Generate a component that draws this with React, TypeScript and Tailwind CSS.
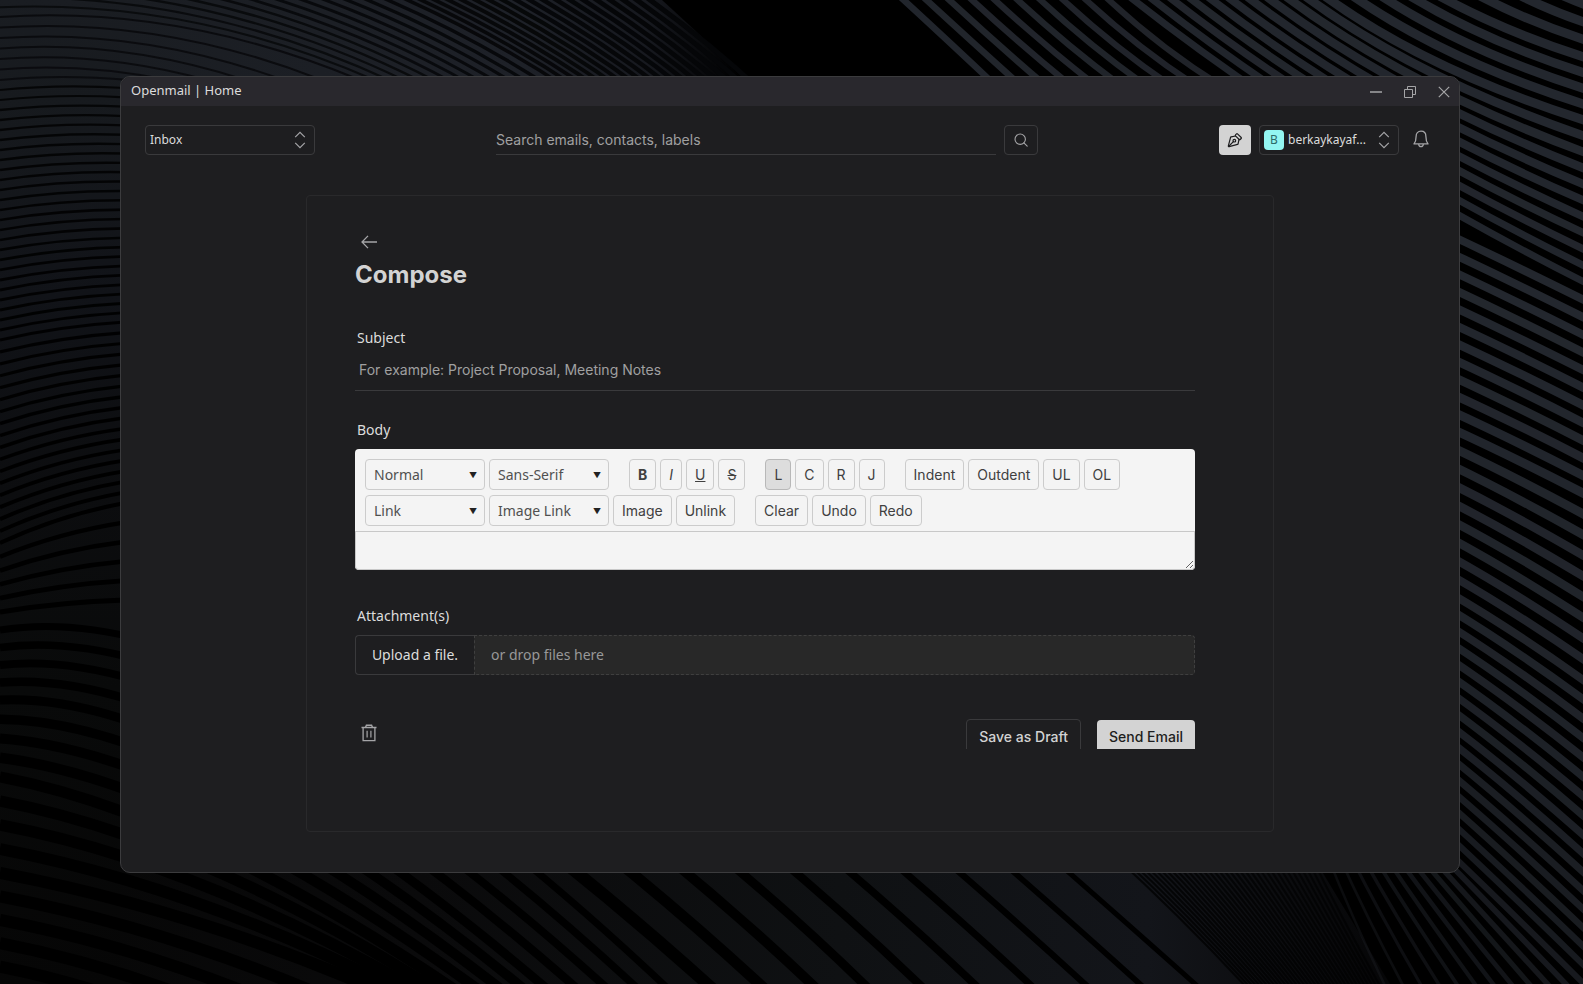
import { useState } from "react";
import type { ReactNode } from "react";
import { PenTool } from "lucide-react";

/* ---------- Wallpaper ---------- */

// start x/y, control x/y, end x/y, stroke width, opacity, lines up to the next key
type Key = [number, number, number, number, number, number, number, number, number];

const arcs: Key[] = [
  [0, 80, 60, 74, 130, 80, 2, 0.7, 6],
  [0, 17, 180, 5, 360, 80, 2, 0.75, 13],
  [0, -110, 330, -70, 570, 90, 3.5, 0.9, 18],
  [300, -200, 600, -60, 760, 90, 5, 1, 1],
];

const leftBands: Key[] = [
  [0, 90, 60, 84, 125, 88, 2.2, 0.75, 25],
  [0, 340, 60, 326, 125, 322, 3, 0.9, 17],
  [0, 543, 60, 515, 125, 503, 4, 1, 5],
  [0, 612, 60, 602, 125, 600, 5, 1, 1],
  [0, 630, 250, 590, 680, 1000, 7, 1, 4],
  [0, 700, 200, 690, 560, 1000, 9, 1, 4],
  [0, 777, 200, 815, 470, 1000, 11, 1, 4],
  [0, 873, 204, 912, 400, 1000, 12, 1, 5],
  [0, 990, 100, 1010, 200, 1060, 12, 1, 1],
];

const lowerBands: Key[] = [
  [400, 740, 560, 850, 725, 1000, 12, 1, 3],
  [600, 760, 760, 880, 880, 1000, 9, 1, 6],
  [940, 760, 1090, 890, 1213, 1000, 5, 1, 1],
];

const fineLines: Key[] = [
  [1108, 850, 1190, 925, 1258, 1000, 2.2, 0.75, 36],
  [1308, 850, 1345, 925, 1388, 1000, 2.2, 0.6, 1],
];

const topBands: Key[] = [
  [895, -8, 943, 36, 995, 85, 6.5, 0.95, 9],
  [1093, -15, 1155, 45, 1220, 85, 6, 0.9, 1],
];

const cornerBands: Key[] = [
  [1115, -15, 1320, 150, 1600, 290, 7, 0.95, 10],
  [1310, -15, 1420, 70, 1600, 125, 9, 1, 4],
  [1420, -15, 1500, 32, 1600, 62, 9, 1, 3],
  [1540, -15, 1570, 0, 1600, 10, 9, 1, 1],
];

const rightBands: Key[] = [
  [1450, 235, 1520, 268, 1600, 308, 8, 1, 11],
  [1450, 428, 1520, 460, 1600, 502, 9, 0.95, 9],
  [1450, 593, 1520, 634, 1600, 692, 8, 0.9, 8],
  [1450, 725, 1520, 778, 1600, 850, 7.5, 0.8, 8],
  [1450, 853, 1520, 920, 1600, 1000, 6, 0.65, 11],
  [1325, 850, 1355, 925, 1392, 1000, 2.5, 0.3, 1],
];

function weave(keys: Key[]): number[][] {
  const lines: number[][] = [];
  for (let i = 0; i < keys.length - 1; i++) {
    const count = keys[i][8];
    for (let n = 0; n < count; n++) {
      lines.push(keys[i].slice(0, 8).map((v, j) => v + ((keys[i + 1][j] - v) * n) / count));
    }
  }
  lines.push(keys[keys.length - 1].slice(0, 8));
  return lines;
}

function Strands({ keys, color }: { keys: Key[]; color: string }) {
  return (
    <g fill="none" stroke={color}>
      {weave(keys).map(([a, b, c, d, e, f, w, o], i) => (
        <path key={i} d={`M${a} ${b}Q${c} ${d} ${e} ${f}`} strokeWidth={w} strokeOpacity={o} />
      ))}
    </g>
  );
}

function Wallpaper() {
  return (
    <svg
      aria-hidden="true"
      className="absolute inset-0 h-full w-full"
      viewBox="0 0 1583 984"
      preserveAspectRatio="xMidYMid slice"
    >
      <defs>
        <linearGradient id="left-fill" x1="0" y1="0" x2="0" y2="1">
          <stop offset="0" stopColor="#1a1d22" />
          <stop offset="0.1" stopColor="#171a1e" />
          <stop offset="0.3" stopColor="#111318" />
          <stop offset="0.5" stopColor="#0c0d0f" />
          <stop offset="0.7" stopColor="#090a0a" />
          <stop offset="1" stopColor="#060606" />
        </linearGradient>
        <linearGradient id="top-fill" gradientUnits="userSpaceOnUse" x1="120" y1="0" x2="740" y2="0">
          <stop offset="0" stopColor="#1a1d22" />
          <stop offset="0.65" stopColor="#1e2128" />
          <stop offset="0.85" stopColor="#17191f" />
          <stop offset="1" stopColor="#000000" />
        </linearGradient>
        <linearGradient id="bottom-fill" gradientUnits="userSpaceOnUse" x1="0" y1="0" x2="1400" y2="0">
          <stop offset="0" stopColor="#060606" />
          <stop offset="0.3" stopColor="#0a0a0b" />
          <stop offset="0.6" stopColor="#0f1113" />
          <stop offset="0.82" stopColor="#13151a" />
          <stop offset="0.9" stopColor="#0d0e11" />
          <stop offset="1" stopColor="#050506" />
        </linearGradient>
      </defs>
      <rect width="1583" height="984" fill="#000" />
      <rect width="125" height="984" fill="url(#left-fill)" />
      <path d="M120 0H662L760 90H120Z" fill="url(#top-fill)" />
      <path d="M120 860H1315L1390 984H120Z" fill="url(#bottom-fill)" />
      <Strands keys={arcs} color="#050608" />
      <Strands keys={leftBands} color="#000000" />
      <Strands keys={lowerBands} color="#000000" />
      <Strands keys={fineLines} color="#000000" />
      <Strands keys={topBands} color="#23272e" />
      <Strands keys={cornerBands} color="#23272e" />
      <Strands keys={rightBands} color="#23272e" />
    </svg>
  );
}

/* ---------- Icons ---------- */

function SearchIcon() {
  return (
    <svg width="14" height="14" viewBox="0 0 14 14" fill="none" stroke="currentColor" aria-hidden="true">
      <circle cx="6.2" cy="6.2" r="5.2" strokeWidth="1.1" />
      <path d="M9.9 9.9l3.3 3.3" strokeWidth="1.1" strokeLinecap="round" />
    </svg>
  );
}

function ExpandIcon() {
  return (
    <svg width="12" height="18" viewBox="0 0 12 18" fill="none" stroke="#a5a5a7" strokeWidth="1.2" aria-hidden="true">
      <path d="M1.2 6.2L6 1.4l4.8 4.8M1.2 11.8L6 16.6l4.8-4.8" />
    </svg>
  );
}

function BellIcon() {
  return (
    <svg width="16" height="18" viewBox="0 0 16 18" fill="none" stroke="currentColor" strokeWidth="1.3" aria-hidden="true">
      <path d="M8 1.2C5 1.2 3.1 3.4 3.1 6.4c0 3.2-.4 5.3-2.1 7.5h14c-1.7-2.2-2.1-4.3-2.1-7.5C12.9 3.4 11 1.2 8 1.2z" strokeLinejoin="round" />
      <path d="M5.6 14.2c.2 1.6 1.2 2.5 2.4 2.5s2.2-.9 2.4-2.5" />
    </svg>
  );
}

function BackIcon() {
  return (
    <svg width="16" height="14" viewBox="0 0 16 14" fill="none" stroke="currentColor" strokeWidth="1.3" aria-hidden="true">
      <path d="M7 0.9L1 7l6 6.1M1 7h15" />
    </svg>
  );
}

function TrashIcon() {
  return (
    <svg width="16" height="18" viewBox="0 0 16 18" fill="none" stroke="currentColor" aria-hidden="true">
      <path d="M0.5 3.5h15M2.1 4v12.6h11.8V4" strokeWidth="1.3" />
      <path d="M4.6 3.3l.8-2h5.2l.8 2" strokeWidth="1.4" />
      <path d="M6.1 6.8v6.8M9.9 6.8v6.8" strokeWidth="1.2" />
    </svg>
  );
}

/* ---------- Title bar ---------- */

function TitleBar() {
  return (
    <div className="flex h-[29px] items-center justify-between bg-[#29282d] pr-2 pl-2.5">
      <h1 className="pb-[3px] font-['Noto_Sans',sans-serif] text-[13px] leading-5 text-[#dcdcdc]">Openmail | Home</h1>
      <div className="flex items-center gap-5 text-[#a5a5a7]">
        <button type="button" aria-label="Minimize" className="flex h-4 w-3.5 items-center justify-center">
          <svg width="12" height="12" viewBox="0 0 12 12" stroke="currentColor" aria-hidden="true">
            <path d="M0 6h12" strokeWidth="1.5" />
          </svg>
        </button>
        <button type="button" aria-label="Restore" className="flex h-4 w-3.5 items-center justify-center">
          <svg width="12" height="12" viewBox="0 0 12 12" fill="none" stroke="currentColor" aria-hidden="true">
            <path d="M0.5 3.5h8v8h-8zM3.5 3.5v-3h8v8h-3" />
          </svg>
        </button>
        <button type="button" aria-label="Close" className="flex h-4 w-3.5 items-center justify-center">
          <svg width="12" height="12" viewBox="0 0 12 12" stroke="currentColor" aria-hidden="true">
            <path d="M0.8 0.8l10.4 10.4M11.2 0.8L0.8 11.2" strokeWidth="1.2" />
          </svg>
        </button>
      </div>
    </div>
  );
}

/* ---------- Header ---------- */

function Header() {
  return (
    <header className="flex items-center justify-between px-6 pt-[19px]">
      <button
        type="button"
        className="flex h-[30px] w-[170px] items-center justify-between rounded border border-[#3a3a3c] pr-2 pl-1 text-[#dcdcdc]"
      >
        <span className="font-['Noto_Sans',sans-serif] text-xs leading-5">Inbox</span>
        <ExpandIcon />
      </button>
      <form className="flex w-[542px] items-center gap-2" onSubmit={(e) => e.preventDefault()}>
        <input
          type="search"
          aria-label="Search"
          placeholder="Search emails, contacts, labels"
          className="h-[30px] min-w-0 flex-1 border-b border-[#3a3a3c] bg-transparent text-sm text-[#dcdcdc] outline-none placeholder:text-[#a0a0a0]"
        />
        <button
          type="submit"
          aria-label="Run search"
          className="flex h-[30px] w-[34px] items-center justify-center rounded border border-[#3a3a3c] text-[#a5a5a7]"
        >
          <SearchIcon />
        </button>
      </form>
      <div className="flex items-center gap-2">
        <button
          type="button"
          aria-label="Compose new email"
          className="flex h-[30px] w-8 items-center justify-center rounded bg-[#d3d3d3] text-[#1e1e20]"
        >
          <PenTool className="size-4 -rotate-90" strokeWidth={1.8} />
        </button>
        <button
          type="button"
          className="flex h-[30px] w-[140px] items-center rounded border border-[#3a3a3c] pr-2 pl-1"
        >
          <span className="flex size-5 items-center justify-center rounded bg-[#93f6f1] font-['Noto_Sans',sans-serif] text-xs text-[#2c6a68]">
            B
          </span>
          <span className="ml-1 flex-1 text-left font-['Noto_Sans',sans-serif] text-xs leading-5 text-[#dcdcdc]">
            berkaykayaf...
          </span>
          <ExpandIcon />
        </button>
        <button type="button" aria-label="Notifications" className="flex h-[30px] w-7 items-start justify-center pt-[5px] text-[#a5a5a7]">
          <BellIcon />
        </button>
      </div>
    </header>
  );
}

/* ---------- Editor ---------- */

function Tool({ children, active = false }: { children: ReactNode; active?: boolean }) {
  return (
    <button
      type="button"
      aria-pressed={active}
      className={`h-[31px] rounded border px-2 text-sm text-[#404040] ${
        active ? "border-[#b8b8b8] bg-[#dddddd]" : "border-[#cccccc]"
      }`}
    >
      {children}
    </button>
  );
}

function ToolSelect({ label, options }: { label: string; options: string[] }) {
  return (
    <div className="relative">
      <select
        aria-label={label}
        className="h-[31px] w-[120px] appearance-none rounded border border-[#cccccc] bg-transparent px-2 font-['Noto_Sans',sans-serif] text-sm text-[#505050]"
      >
        {options.map((o) => (
          <option key={o}>{o}</option>
        ))}
      </select>
      <span aria-hidden="true" className="pointer-events-none absolute inset-y-0 right-2 flex items-center text-[8px] text-[#222222]">
        ▼
      </span>
    </div>
  );
}

function Group({ children }: { children: ReactNode }) {
  return <div className="flex gap-1">{children}</div>;
}

function Editor() {
  return (
    <div className="overflow-hidden rounded bg-[#f4f4f4]">
      <div className="flex flex-col gap-[5px] border-b border-[#c8c8c8] px-2.5 pt-2.5 pb-[5px]">
        <div className="flex flex-wrap gap-5">
          <Group>
            <ToolSelect label="Text style" options={["Normal", "Heading 1", "Heading 2"]} />
            <ToolSelect label="Font family" options={["Sans-Serif", "Serif", "Monospace"]} />
          </Group>
          <Group>
            <Tool><b>B</b></Tool>
            <Tool><i>I</i></Tool>
            <Tool><u>U</u></Tool>
            <Tool><s>S</s></Tool>
          </Group>
          <Group>
            <Tool active>L</Tool>
            <Tool>C</Tool>
            <Tool>R</Tool>
            <Tool>J</Tool>
          </Group>
          <Group>
            <Tool>Indent</Tool>
            <Tool>Outdent</Tool>
            <Tool>UL</Tool>
            <Tool>OL</Tool>
          </Group>
        </div>
        <div className="flex flex-wrap gap-5">
          <Group>
            <ToolSelect label="Insert link" options={["Link", "Text link"]} />
            <ToolSelect label="Insert image link" options={["Image Link", "From URL"]} />
            <Tool>Image</Tool>
            <Tool>Unlink</Tool>
          </Group>
          <Group>
            <Tool>Clear</Tool>
            <Tool>Undo</Tool>
            <Tool>Redo</Tool>
          </Group>
        </div>
      </div>
      <textarea
        id="body"
        className="block h-[38px] w-full resize rounded-b border border-t-0 border-[#c8c8c8] bg-transparent px-2 py-2 text-sm text-[#333333] outline-none"
      />
    </div>
  );
}

/* ---------- Compose form ---------- */

const labelClass = "block px-0.5 font-['Noto_Sans',sans-serif] text-sm leading-5 text-[#dcdcdc]";

function Compose() {
  const [subject, setSubject] = useState("");
  return (
    <section className="mx-auto mt-10 mb-10 flex w-full max-w-[968px] flex-1 flex-col rounded border border-[#29292b] pt-9 pr-[78px] pb-[82px] pl-12">
      <form className="h-[517px] overflow-hidden" onSubmit={(e) => e.preventDefault()}>
        <button type="button" aria-label="Back" className="flex h-5 w-7 items-center justify-center text-[#a5a5a7]">
          <BackIcon />
        </button>
        <h2 className="mt-1.5 text-2xl leading-[34px] font-bold text-[#d3d3d3]">Compose</h2>

        <label htmlFor="subject" className={`${labelClass} mt-9`}>Subject</label>
        <input
          id="subject"
          value={subject}
          onChange={(e) => setSubject(e.target.value)}
          placeholder="For example: Project Proposal, Meeting Notes"
          className="mt-0.5 block h-[41px] w-full border-b border-[#3a3a3c] bg-transparent px-1 pb-0.5 text-sm text-[#dcdcdc] outline-none placeholder:text-[#a0a0a0]"
        />

        <label htmlFor="body" className={`${labelClass} mt-[29px] mb-[9px]`}>Body</label>
        <Editor />

        <label htmlFor="files" className={`${labelClass} mt-9 mb-[9px]`}>Attachment(s)</label>
        <div className="flex h-10 font-['Noto_Sans',sans-serif] text-sm">
          <label
            htmlFor="files"
            className="relative flex w-[119px] cursor-pointer items-center justify-center rounded-l border border-r-0 border-[#3a3a3c] text-[#dcdcdc]"
          >
            Upload a file.
            <input id="files" type="file" multiple className="sr-only" />
          </label>
          <div className="flex flex-1 items-center rounded-r border border-dashed border-[#3f3f3f] bg-[#282828] px-4 text-[#989898]">
            or drop files here
          </div>
        </div>

        <div className="mt-11 flex items-start justify-between">
          <button type="button" aria-label="Discard draft" className="flex h-7 w-7 items-center justify-center text-[#a5a5a7]">
            <TrashIcon />
          </button>
          <div className="flex items-center gap-4">
            <button type="button" className="h-9 rounded border border-[#3a3a3c] px-3 text-sm font-medium text-[#d3d3d3]">
              Save as Draft
            </button>
            <button type="submit" className="h-[34px] rounded bg-[#d3d3d3] px-3 text-sm font-medium text-[#1e1e20]">
              Send Email
            </button>
          </div>
        </div>
      </form>
    </section>
  );
}

export default function App() {
  return (
    <div className="relative isolate flex min-h-screen flex-col bg-black pt-[76px] pr-[123px] pb-[111px] pl-[120px] font-['Inter',sans-serif]">
      <Wallpaper />
      <main className="relative flex flex-1 flex-col overflow-hidden rounded-[10px] border border-[#3b3b3d] bg-[#1e1e20]">
        <TitleBar />
        <Header />
        <Compose />
      </main>
    </div>
  );
}
